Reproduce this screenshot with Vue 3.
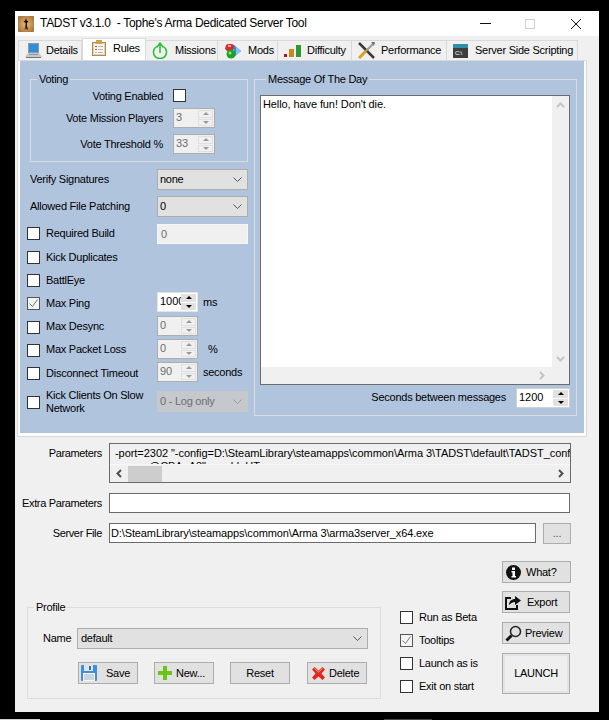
<script setup>
const bools = [
  { label: 'Run as Beta', on: false },
  { label: 'Tooltips', on: true },
  { label: 'Launch as is', on: false },
  { label: 'Exit on start', on: false },
]
</script>

<template>
  <div class="window">
    <header class="titlebar">
      <svg class="logo" width="16" height="16" viewBox="0 0 16 16">
        <defs>
          <radialGradient id="lg" cx=".5" cy=".5" r=".7">
            <stop offset="0" stop-color="#f0bc70" />
            <stop offset="1" stop-color="#9a6a3a" />
          </radialGradient>
        </defs>
        <rect width="16" height="16" rx="1" fill="url(#lg)" />
        <path d="M8 2l.8 2.500 1.700 1-1.500 1.500v3l1 3.500H8.500L8 11l-.8 2.500H6.500l1-3.500V7L5.500 5.500l1.700-1z" fill="#1d120a" />
      </svg>
      <span class="title">TADST v3.1.0&nbsp; - Tophe's Arma Dedicated Server Tool</span>
      <span class="wbtn min"></span>
      <span class="wbtn max"></span>
      <svg class="wbtn close" width="10" height="10" viewBox="0 0 10 10"><path d="M0 0l10 10M10 0L0 10" stroke="#111" fill="none" /></svg>
    </header>

    <nav class="tabs">
      <div class="tab t1">
        <svg width="17" height="17" viewBox="0 0 17 17">
          <rect x="3" y="1" width="11" height="10" fill="#8a9aa8" />
          <rect x="4" y="2" width="9" height="8" fill="#2f8fd8" />
          <path d="M3 11h11l3 4H0z" fill="#c3c8cc" />
          <path d="M1 15h15v1H1z" fill="#6d7780" />
          <path d="M4 12h9v1H4z" fill="#8f979e" />
        </svg>
        <span>Details</span>
      </div>
      <div class="tab t2 active">
        <svg width="14" height="16" viewBox="0 0 14 16">
          <rect x="0.500" y="2.500" width="13" height="13" fill="#e8d3a8" stroke="#a98a58" />
          <rect x="2" y="4" width="10" height="10" fill="#f8f6f0" />
          <rect x="4" y="0" width="6" height="4" fill="#c9a24c" />
          <path d="M3 6h2v1H3zM3 9h2v1H3z" fill="#d84a3a" />
          <path d="M6 6h5v1H6zM6 9h5v1H6zM6 12h5v1H6zM3 12h2v1H3z" fill="#b4b4b4" />
        </svg>
        <span>Rules</span>
      </div>
      <div class="tab t3">
        <svg width="16" height="17" viewBox="0 0 16 17">
          <path d="M5 4.300a6.500 6.500 0 1 0 6 0" fill="none" stroke="#25c033" stroke-width="1.500" />
          <path d="M8 11V2M5 5l3-4 3 4" fill="none" stroke="#25c033" stroke-width="1.500" />
        </svg>
        <span>Missions</span>
      </div>
      <div class="tab t4">
        <svg width="17" height="16" viewBox="0 0 17 16">
          <path d="M10 2l7 6-7 6z" fill="#2e8fe0" />
          <path d="M12 4l5 4-5 4z" fill="#86c4ef" />
          <path d="M2 2l2-1h4l2 1v4l-2 2H3L1 6z" fill="#cf2f2f" />
          <rect x="4" y="2" width="3" height="2" fill="#f3a0a0" />
          <circle cx="7" cy="11" r="4.500" fill="#1fa31f" />
          <circle cx="6" cy="10" r="1.500" fill="#8fe08f" />
        </svg>
        <span>Mods</span>
      </div>
      <div class="tab t5">
        <svg width="17" height="12" viewBox="0 0 17 12">
          <rect x="0" y="9" width="3" height="3" fill="#b01818" />
          <rect x="5" y="4" width="5" height="8" fill="#c88a1e" />
          <rect x="12" y="0" width="5" height="12" fill="#2c9a2c" />
        </svg>
        <span>Difficulty</span>
      </div>
      <div class="tab t6">
        <svg width="17" height="17" viewBox="0 0 17 17">
          <path d="M1 1l15 15" stroke="#3a3a3a" stroke-width="2.500" />
          <path d="M16 1L8 9" stroke="#9a9a9a" stroke-width="2" />
          <path d="M8 9l-7 7" stroke="#d9a21f" stroke-width="3" />
          <path d="M13 0l4 0-1 4z" fill="#777" />
        </svg>
        <span>Performance</span>
      </div>
      <div class="tab t7">
        <svg width="15" height="14" viewBox="0 0 15 14">
          <rect width="15" height="14" fill="#3d3d3d" />
          <rect width="15" height="4" fill="#2f8fa8" />
          <text x="2" y="11" font-size="6" fill="#fff" font-family="Liberation Sans, sans-serif">C:\</text>
        </svg>
        <span>Server Side Scripting</span>
      </div>
    </nav>

    <section class="tabpage">
      <div class="blue">
        <div class="leftcol">
          <fieldset class="group voting">
            <legend>Voting</legend>
            <div class="vrow vr1">
              <label>Voting Enabled</label>
              <span class="cb"></span>
            </div>
            <div class="vrow vr2">
              <label>Vote Mission Players</label>
              <div class="spin off w42"><span class="val">3</span><span class="arrows"><i class="up"></i><i class="dn"></i></span></div>
            </div>
            <div class="vrow vr3">
              <label>Vote Threshold %</label>
              <div class="spin off w42"><span class="val">33</span><span class="arrows"><i class="up"></i><i class="dn"></i></span></div>
            </div>
          </fieldset>

          <div class="rules">
            <div class="lrow">
              <span class="lab plain">Verify Signatures</span>
              <div class="combo w91"><span>none</span><svg class="chev" width="9" height="5" viewBox="0 0 9 5"><path d="M.5.500l4 4 4-4" fill="none" stroke="#555" /></svg></div>
            </div>
            <div class="lrow">
              <span class="lab plain">Allowed File Patching</span>
              <div class="combo w91"><span>0</span><svg class="chev" width="9" height="5" viewBox="0 0 9 5"><path d="M.5.500l4 4 4-4" fill="none" stroke="#555" /></svg></div>
            </div>
            <div class="lrow">
              <span class="cb"></span><span class="lab">Required Build</span>
              <div class="field off w91">0</div>
            </div>
            <div class="lrow">
              <span class="cb"></span><span class="lab">Kick Duplicates</span>
            </div>
            <div class="lrow">
              <span class="cb"></span><span class="lab">BattlEye</span>
            </div>
            <div class="lrow">
              <span class="cb on"><svg width="11" height="11" viewBox="0 0 11 11"><path d="M1.500 5.500l3 3 5-7" fill="none" stroke="#777" /></svg></span><span class="lab low">Max Ping</span>
              <div class="spin w41"><span class="val clip">1000</span><span class="arrows"><i class="up"></i><i class="dn"></i></span></div>
              <span class="unit">ms</span>
            </div>
            <div class="lrow">
              <span class="cb"></span><span class="lab">Max Desync</span>
              <div class="spin off w41"><span class="val">0</span><span class="arrows"><i class="up"></i><i class="dn"></i></span></div>
            </div>
            <div class="lrow">
              <span class="cb"></span><span class="lab">Max Packet Loss</span>
              <div class="spin off w41"><span class="val">0</span><span class="arrows"><i class="up"></i><i class="dn"></i></span></div>
              <span class="unit pct">%</span>
            </div>
            <div class="lrow">
              <span class="cb"></span><span class="lab low">Disconnect Timeout</span>
              <div class="spin off w41"><span class="val">90</span><span class="arrows"><i class="up"></i><i class="dn"></i></span></div>
              <span class="unit">seconds</span>
            </div>
            <div class="lrow">
              <span class="cb"></span><span class="lab two">Kick Clients On Slow Network</span>
              <div class="combo dis w91"><span>0 - Log only</span><svg class="chev" width="9" height="5" viewBox="0 0 9 5"><path d="M.5.500l4 4 4-4" fill="none" stroke="#9a9a9a" /></svg></div>
            </div>
          </div>
        </div>

        <fieldset class="group motd">
          <legend>Message Of The Day</legend>
          <div class="memo">
            <div class="memotext">Hello, have fun! Don't die.</div>
            <div class="vsb">
              <svg width="9" height="6" viewBox="0 0 9 6"><path d="M1 5l3.500-3.500L8 5" fill="none" stroke="#c4c4c4" stroke-width="2" /></svg>
              <svg width="9" height="6" viewBox="0 0 9 6"><path d="M1 1l3.500 3.500L8 1" fill="none" stroke="#c4c4c4" stroke-width="2" /></svg>
            </div>
            <div class="hsb">
              <svg width="6" height="9" viewBox="0 0 6 9"><path d="M1 1l3.500 3.500L1 8" fill="none" stroke="#c4c4c4" stroke-width="2" /></svg>
            </div>
          </div>
          <div class="secs">
            <span>Seconds between messages</span>
            <div class="spin w54"><span class="val">1200</span><span class="arrows"><i class="up"></i><i class="dn"></i></span></div>
          </div>
        </fieldset>
      </div>
    </section>

    <div class="form">
      <label>Parameters</label>
      <div class="params">
        <div class="paramtext">
          <div>-port=2302 "-config=D:\SteamLibrary\steamapps\common\Arma 3\TADST\default\TADST_config.cfg"</div>
          <div class="second">..: @CBA_A3" -enableHT</div>
        </div>
        <div class="phsb">
          <svg class="pl" width="6" height="9" viewBox="0 0 6 9"><path d="M5 1L1.500 4.500 5 8" fill="none" stroke="#505050" stroke-width="2" /></svg>
          <span class="thumb"></span>
          <svg class="pr" width="6" height="9" viewBox="0 0 6 9"><path d="M1 1l3.500 3.500L1 8" fill="none" stroke="#505050" stroke-width="2" /></svg>
        </div>
      </div>
      <label class="r2">Extra Parameters</label>
      <div class="input r2 full"></div>
      <label class="r3">Server File</label>
      <div class="serverrow r3">
        <div class="input server">D:\SteamLibrary\steamapps\common\Arma 3\arma3server_x64.exe</div>
        <button class="btn dots">...</button>
      </div>
    </div>

    <div class="bottom">
      <fieldset class="group profile">
        <legend>Profile</legend>
        <div class="namerow">
          <label>Name</label>
          <div class="combo grow"><span>default</span><svg class="chev" width="9" height="5" viewBox="0 0 9 5"><path d="M.5.500l4 4 4-4" fill="none" stroke="#555" /></svg></div>
        </div>
        <div class="probtns">
          <button class="btn pb save">
            <svg width="16" height="16" viewBox="0 0 16 16">
              <rect width="16" height="16" rx="1" fill="#3f8fdc" />
              <rect x="3" y="0" width="9" height="6" fill="#d9e6f2" />
              <rect x="8" y="1" width="2" height="4" fill="#3b6ea5" />
              <rect x="2" y="8" width="12" height="8" fill="#f6f6f6" />
              <path d="M3 10h10M3 12h10M3 14h10" stroke="#9fb3c6" />
            </svg>
            <span>Save</span>
          </button>
          <button class="btn pb new">
            <svg width="14" height="14" viewBox="0 0 14 14"><path d="M5 0h4v5h5v4H9v5H5V9H0V5h5z" fill="#6cc417" /></svg>
            <span>New...</span>
          </button>
          <button class="btn pb reset"><span>Reset</span></button>
          <button class="btn pb del">
            <svg width="13" height="13" viewBox="0 0 13 13">
              <path d="M2.500 0l4 3.500 4-3.500L13 2.500 9.500 6.500 13 10.500 10.500 13l-4-3.500-4 3.500L0 10.500l3.500-4L0 2.500z" fill="#e02a20" />
              <path d="M2.500 1.500l4 3.500 4-3.500" stroke="#f6a090" fill="none" />
            </svg>
            <span>Delete</span>
          </button>
        </div>
      </fieldset>

      <div class="checks">
        <div v-for="b in bools" :key="b.label" class="chk">
          <span class="cb" :class="{ on: b.on }">
            <svg v-if="b.on" width="11" height="11" viewBox="0 0 11 11"><path d="M1.500 5.500l3 3 5-7" fill="none" stroke="#777" /></svg>
          </span>
          <span>{{ b.label }}</span>
        </div>
      </div>

      <div class="actions">
        <button class="btn act what">
          <svg width="15" height="15" viewBox="0 0 15 15">
            <circle cx="7.500" cy="7.500" r="7.500" fill="#111" />
            <rect x="6" y="2.500" width="3" height="2.500" fill="#fff" />
            <path d="M5.500 6H9v5h1v1.500H5.500V11h1V7.500h-1z" fill="#fff" />
          </svg>
          <span>What?</span>
        </button>
        <button class="btn act export">
          <svg width="16" height="16" viewBox="0 0 16 16">
            <path d="M6 4H1v11h11v-4" fill="none" stroke="#111" stroke-width="2" />
            <path d="M4 11c0-4 3-6 6-6V2l6 4.500-6 4.500V8c-2 0-4 1-6 3z" fill="#111" />
          </svg>
          <span>Export</span>
        </button>
        <button class="btn act preview">
          <svg width="17" height="17" viewBox="0 0 17 17">
            <circle cx="10.500" cy="6.500" r="5" fill="none" stroke="#222" stroke-width="1.500" />
            <path d="M6.500 10.500L1.500 15.500" stroke="#111" stroke-width="3" />
          </svg>
          <span>Preview</span>
        </button>
        <button class="btn launch">LAUNCH</button>
      </div>
    </div>
  </div>
  <div class="strip"><span class="s1"></span><span class="s2"></span></div>
</template>

<style>
html, body { background: #000; margin: 0; overflow: hidden; }
</style>

<style scoped>
* { box-sizing: border-box; }
.window {
  position: relative;
  margin: 11px 0 0 15px;
  width: 584px;
  height: 701px;
  background: #f0f0f0;
  font: 11px/13px "Liberation Sans", Arial, sans-serif;
  letter-spacing: -0.25px;
  color: #000;
  overflow: hidden;
}
.titlebar {
  display: flex;
  align-items: center;
  height: 25px;
  background: #fff;
  padding: 0 18px 0 3px;
}
.logo { flex: none; }
.title { font-size: 12px; letter-spacing: -0.3px; margin-left: 6px; white-space: pre; }
.wbtn { flex: none; display: block; }
.min { width: 11px; height: 1px; background: #111; margin-left: auto; }
.max { width: 10px; height: 10px; border: 1px solid #cfcfcf; margin-left: 34px; }
.close { margin-left: 36px; }

.tabs {
  display: flex;
  align-items: flex-end;
  height: 24px;
  padding-left: 3px;
}
.tab {
  height: 20px;
  display: flex;
  align-items: center;
  background: #f0f0f0;
  border: 1px solid #d9d9d9;
  border-bottom: 0;
  border-left: 0;
  white-space: nowrap;
}
.tab.active { height: 22px; background: #fff; padding-bottom: 3px; border-left: 1px solid #d9d9d9; }
.t1 { width: 64px; padding-left: 6px; border-left: 1px solid #d9d9d9; }
.t1 span { margin-left: 4px; }
.t2 { width: 64px; padding-left: 9px; }
.t2 span { margin-left: 7px; }
.t3 { width: 72px; padding-left: 6px; }
.t3 span { margin-left: 7px; }
.t4 { width: 60px; padding-left: 6px; }
.t4 span { margin-left: 7px; }
.t5 { width: 74px; padding-left: 6px; }
.t5 span { margin-left: 6px; }
.t6 { width: 95px; padding-left: 6px; }
.t6 span { margin-left: 6px; }
.t7 { width: 131px; padding-left: 6px; }
.t7 span { margin-left: 7px; }

.tabpage {
  margin-left: 2px;
  width: 570px;
  height: 377px;
  background: #fff;
  border: 1px solid #d9d9d9;
  padding: 0 2px 2px;
}
.blue {
  display: flex;
  gap: 6px;
  height: 372px;
  background: #b0c4de;
  padding: 12px 0 0 7px;
}
.group {
  margin: 0;
  padding: 0;
  min-width: 0;
  border: 1px solid #dcdcdc;
}
legend {
  margin-left: 6px;
  padding: 0 2px;
  height: 13px;
  line-height: 13px;
  font-size: 11px;
}
.leftcol { width: 221px; flex: none; }
.voting {
  margin-left: 3px;
  width: 218px;
  height: 89px;
  display: grid;
  grid-template-rows: 19px 26px 20px;
  padding-top: 3px;
}
.vrow { display: flex; align-items: center; height: 20px; }
.vrow label { width: 132px; text-align: right; margin-right: 10px; }
.vr1 { height: 13px; }
.vr1 label { padding-top: 2px; }

.rules {
  margin-top: 7px;
  display: grid;
  grid-template-rows: 27px 27px 24px 23px 22px 24px 23px 23px 29px 20px;
}
.lrow { display: flex; align-items: center; height: 20px; }
.lrow:nth-child(-n+3), .lrow:nth-child(10) { height: 21px; }
.lab { width: 111px; margin-left: 6px; flex: none; }
.lab.low { padding-top: 2px; }
.lab.plain { width: 127px; margin-left: 3px; margin-right: 0; }
.lab.two { line-height: 13px; padding-top: 1px; }
.unit { margin-left: 5px; }
.unit.pct { margin-left: 10px; }

.cb {
  flex: none;
  width: 13px;
  height: 13px;
  background: #fff;
  border: 1px solid #333;
  display: flex;
  align-items: center;
  justify-content: center;
}
.lrow .cb { position: relative; top: 1px; }
.lrow:nth-child(-n+5) .cb { top: 0; }
.cb.on { background: #f4f4f4; border-color: #555; }

.combo {
  height: 21px;
  background: #e1e1e1;
  border: 1px solid #adadad;
  display: flex;
  align-items: center;
  justify-content: space-between;
  padding: 0 5px 0 2px;
}
.w91 { width: 91px; flex: none; }
.combo.dis { background: #c5c8cc; border-color: #c5c8cc; color: #6d6d6d; }
.field {
  height: 20px;
  padding: 3px 3px;
  background: #f0f0f0;
  border: 1px solid #f6f6f6;
  color: #6d6d6d;
}
.spin {
  display: flex;
  height: 20px;
  background: #fff;
  border: 1px solid #e4e4e4;
  padding: 1px;
  flex: none;
}
.spin.off { background: #f0f0f0; border-color: #adadad; color: #6d6d6d; }
.w42 { width: 42px; }
.w41 { width: 41px; }
.w54 { width: 54px; border-color: #d0d0d0; }
.val { flex: 1; padding-left: 1px; line-height: 15px; overflow: hidden; min-width: 0; letter-spacing: 0; }
.arrows { width: 15px; flex: none; display: flex; flex-direction: column; gap: 1px; }
.arrows i {
  flex: 1;
  background: #e1e1e1;
  display: flex;
  align-items: center;
  justify-content: center;
}
.arrows i::before {
  content: "";
  width: 0;
  height: 0;
  border-left: 3px solid transparent;
  border-right: 3px solid transparent;
}
.arrows .up::before { border-bottom: 3px solid #000; }
.arrows .dn::before { border-top: 3px solid #000; }
.off .arrows i { background: #f0f0f0; border: 1px solid #e0e0e0; }
.off .arrows .up::before { border-bottom-color: #9a9a9a; }
.off .arrows .dn::before { border-top-color: #9a9a9a; }

.motd { width: 323px; height: 343px; padding-left: 5px; }
.memo {
  position: relative;
  margin-top: 9px;
  width: 310px;
  height: 290px;
  background: #fff;
  border: 1px solid #6b6b6b;
  padding: 2px;
}
.memotext { letter-spacing: -0.1px; }
.vsb {
  position: absolute;
  top: 0;
  right: 0;
  width: 17px;
  height: 272px;
  background: #f0f0f0;
  display: flex;
  flex-direction: column;
  justify-content: space-between;
  align-items: center;
  padding: 6px 0;
}
.hsb {
  position: absolute;
  left: 0;
  right: 0;
  bottom: 0;
  height: 17px;
  background: #f0f0f0;
  display: flex;
  align-items: center;
  justify-content: flex-end;
  padding-right: 24px;
}
.secs {
  margin-top: 3px;
  width: 310px;
  display: flex;
  justify-content: flex-end;
  align-items: center;
  height: 20px;
  gap: 10px;
}
.secs > span { padding-bottom: 2px; }

.form {
  display: grid;
  grid-template-columns: 87px 1fr;
  column-gap: 7px;
  grid-template-rows: 40px 20px 21px;
  row-gap: 10px;
  margin-top: 6px;
  width: 557px;
}
.form label { text-align: right; line-height: 20px; letter-spacing: -0.35px; }
.params { border: 1px solid #6b6b6b; width: 462px; background: #f0f0f0; overflow: hidden; }
.paramtext {
  height: 20px;
  overflow: hidden;
  padding: 3px 0 0 5px;
  white-space: pre;
  letter-spacing: -0.05px;
}
.second { padding-left: 22px; }
.phsb {
  height: 18px;
  display: flex;
  align-items: center;
  border-top: 1px solid #f8f8f8;
  background: #f0f0f0;
}
.pl { margin-left: 6px; }
.thumb { width: 34px; height: 16px; background: #cdcdcd; margin-left: 6px; }
.pr { margin-left: auto; margin-right: 6px; }
.input {
  height: 20px;
  background: #fff;
  border: 1px solid #6b6b6b;
  padding: 3px 1px;
  white-space: pre;
  letter-spacing: -0.12px;
}
.full { width: 461px; }
.server { width: 427px; flex: none; }
.serverrow { display: flex; gap: 7px; height: 21px; }
.btn {
  font: inherit;
  letter-spacing: inherit;
  color: #000;
  background: #e1e1e1;
  border: 1px solid #adadad;
  padding: 0;
  margin: 0;
  display: flex;
  align-items: center;
}
.dots { width: 28px; height: 21px; justify-content: center; color: #555; }

.bottom { display: flex; padding-left: 12px; margin-top: 17px; }
.profile { width: 354px; height: 98px; margin-top: 40px; flex: none; }
.namerow { display: flex; align-items: center; margin-top: 14px; padding-left: 15px; width: 340px; }
.namerow label { width: 34px; }
.grow { width: 291px; flex: none; padding-left: 3px; }
.probtns { display: flex; padding-left: 50px; margin-top: 13px; }
.pb { width: 60px; height: 22px; flex: none; }
.save { padding-left: 2px; }
.save span { margin-left: 9px; }
.new { margin-left: 16px; padding-left: 3px; }
.new span { margin-left: 4px; }
.reset { margin-left: 16px; justify-content: center; }
.del { margin-left: 17px; padding-left: 4px; }
.del span { margin-left: 4px; }

.checks { margin: 50px 0 0 19px; width: 102px; flex: none; display: grid; grid-auto-rows: 23px; }
.chk { display: flex; align-items: flex-start; gap: 6px; height: 13px; }

.actions { display: flex; flex-direction: column; width: 69px; flex: none; }
.act { width: 68px; height: 22px; }
.what { width: 69px; padding-left: 3px; }
.what span { margin-left: 5px; }
.export { margin-top: 8px; padding-left: 2px; }
.export span { margin-left: 6px; }
.preview { margin-top: 9px; padding-left: 2px; }
.preview span { margin-left: 3px; }
.launch {
  margin-top: 9px;
  width: 68px;
  height: 41px;
  background: #efefef;
  box-shadow: inset 0 0 0 2px #e4e4e4;
  justify-content: center;
}
.strip { display: flex; height: 1px; margin-top: 7px; }
.s1 { width: 40px; height: 1px; background: #d0d0d0; }
.s2 { width: 48px; height: 1px; background: #4a4a4a; margin-left: 344px; }
</style>
